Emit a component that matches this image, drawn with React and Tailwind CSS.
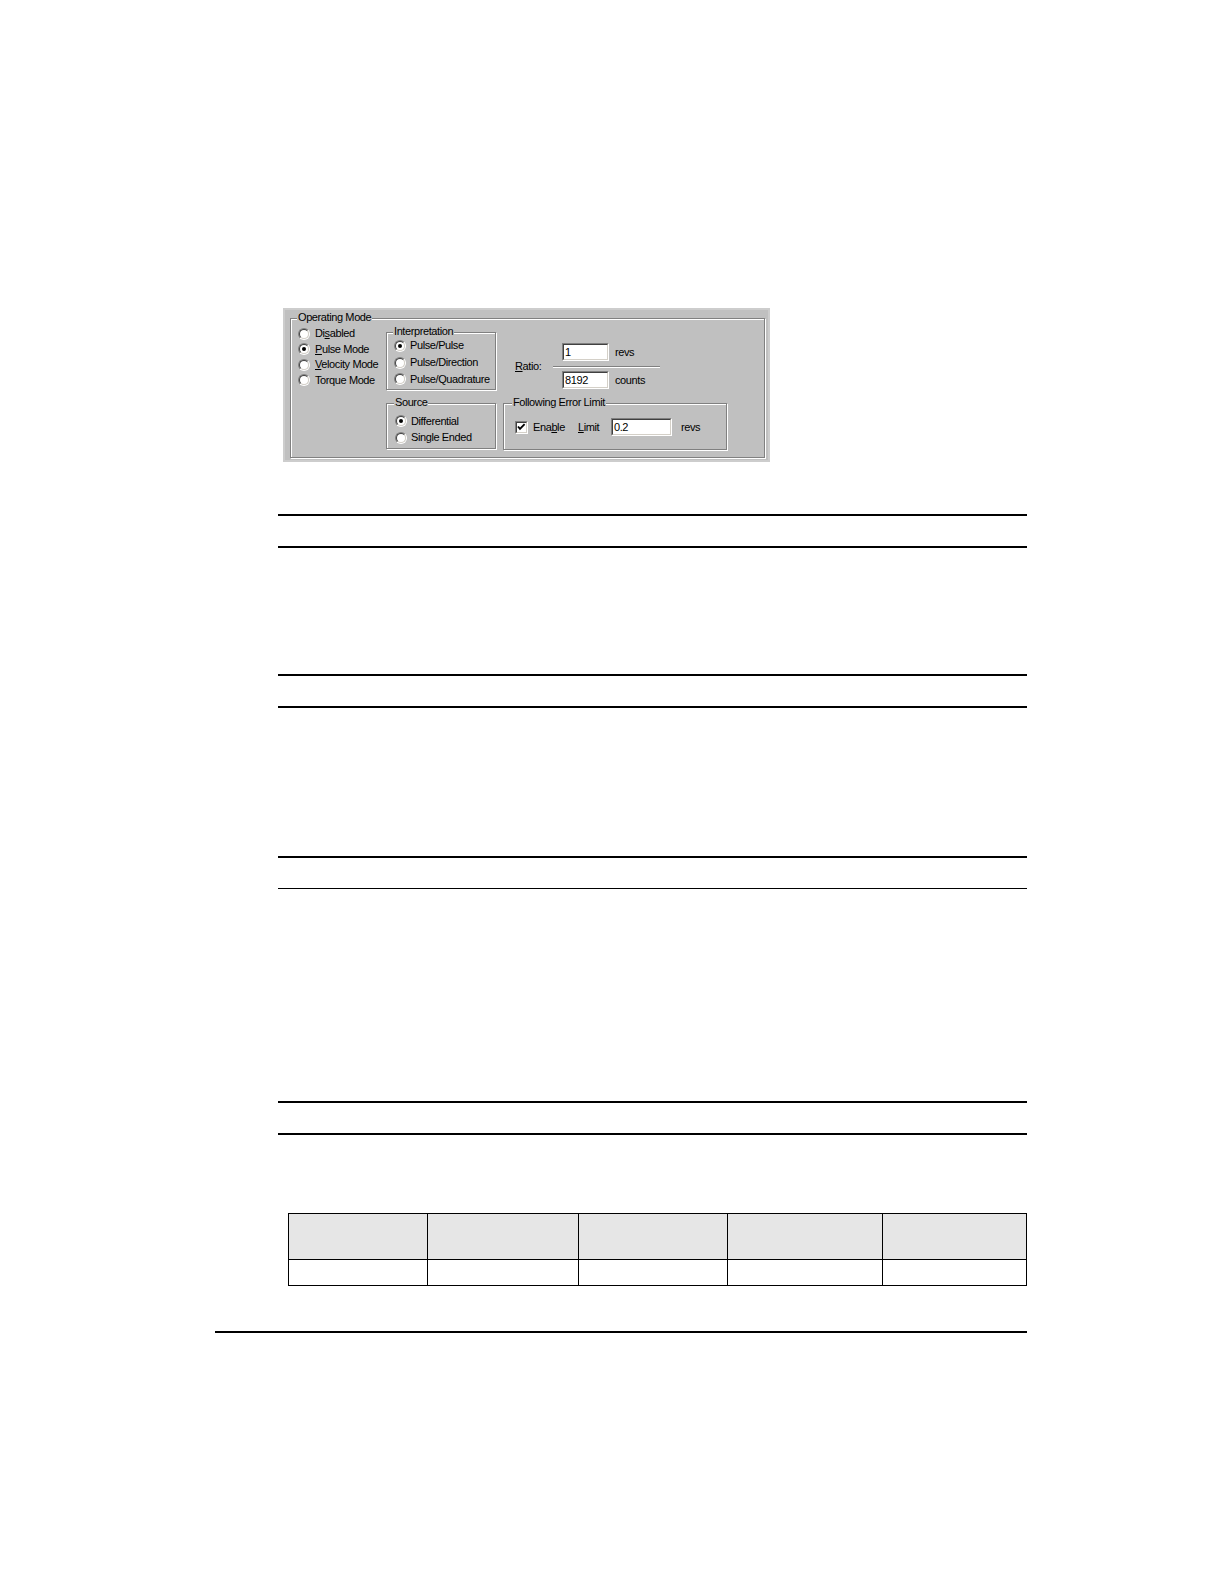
import React from "react";

// classic win9x look: sunken radio button
const Radio = ({ checked }) => (
  <span className="inline-block w-[12px] h-[12px] shrink-0 rounded-full border border-t-[#808080] border-l-[#808080] border-r-white border-b-white">
    <span className="flex w-full h-full items-center justify-center rounded-full border border-t-[#404040] border-l-[#404040] border-r-[#d4d0c8] border-b-[#d4d0c8] bg-white">
      {checked && <span className="block w-[4px] h-[4px] rounded-full bg-black" />}
    </span>
  </span>
);

const Checkbox = ({ checked }) => (
  <span className="inline-block w-[13px] h-[13px] shrink-0 border border-t-[#808080] border-l-[#808080] border-r-white border-b-white">
    <span className="flex w-full h-full items-center justify-center border border-t-[#404040] border-l-[#404040] border-r-[#d4d0c8] border-b-[#d4d0c8] bg-white">
      {checked && (
        <svg width="9" height="9" viewBox="0 0 9 9">
          <polyline points="1,3.5 3,5.8 7.6,1.2" fill="none" stroke="#000" strokeWidth="1.9" />
        </svg>
      )}
    </span>
  </span>
);

const TextBox = ({ value, width }) => (
  <span className="inline-block h-[18px] shrink-0 border border-t-[#808080] border-l-[#808080] border-r-white border-b-white" style={{ width }}>
    <span className="flex w-full h-full items-center pl-[1px] border border-t-[#404040] border-l-[#404040] border-r-[#d4d0c8] border-b-[#d4d0c8] bg-white leading-none">
      {value}
    </span>
  </span>
);

const GroupBox = ({ title, titleLeft, className, children }) => (
  <div className={"relative border border-[#808080] shadow-[inset_1px_1px_0_#fff,1px_1px_0_#fff] " + className}>
    <span className={"absolute -top-[8px] px-[1px] bg-[#c0c0c0] leading-[13px] " + titleLeft}>{title}</span>
    {children}
  </div>
);

const Option = ({ checked, gap, className, children }) => (
  <div className={"flex items-center " + className}>
    <Radio checked={checked} />
    <span className={gap + " leading-none"}>{children}</span>
  </div>
);

const Line = ({ className }) => <div className={"ml-[278px] w-[749px] bg-black " + className} />;

const Dialog = () => (
  <div
    className="ml-[283px] w-[487px] h-[154px] bg-[#c0c0c0] border-2 border-[#cdcdcd] pl-[5px] pt-[8px] text-[11px] tracking-[-0.4px] text-black"
    style={{ fontFamily: '"Liberation Sans", Arial, sans-serif' }}
  >
    <GroupBox title="Operating Mode" titleLeft="left-[6px]" className="w-[475px] h-[140px] flex items-start">
      {/* mode list */}
      <div className="pl-[7px] mt-[7px] w-[95px] shrink-0">
        <Option gap="ml-[5px]" className="h-[15.5px]">
          Di<u className="underline-offset-1">s</u>abled
        </Option>
        <Option checked gap="ml-[5px]" className="h-[15.5px]">
          <u className="underline-offset-1">P</u>ulse Mode
        </Option>
        <Option gap="ml-[5px]" className="h-[15.5px]">
          <u className="underline-offset-1">V</u>elocity Mode
        </Option>
        <Option gap="ml-[5px]" className="h-[15.5px]">
          Torque Mode
        </Option>
      </div>

      <div className="mt-[13px] w-[110px] shrink-0">
        <GroupBox title="Interpretation" titleLeft="left-[6px]" className="w-[110px] h-[58px] pl-[7px] pt-[4px]">
          <Option checked gap="ml-[4px]" className="h-[17px]">Pulse/Pulse</Option>
          <Option gap="ml-[4px]" className="h-[17px]">Pulse/Direction</Option>
          <Option gap="ml-[4px]" className="h-[16px]">Pulse/Quadrature</Option>
        </GroupBox>
        <GroupBox title="Source" titleLeft="left-[7px]" className="mt-[13px] w-[110px] h-[46px] pl-[8px] pt-[9px]">
          <Option checked gap="ml-[4px]" className="h-[16.5px]">Differential</Option>
          <Option gap="ml-[4px]" className="h-[16.5px]">Single Ended</Option>
        </GroupBox>
      </div>

      <div className="ml-[7px] mt-[13px] w-[224px] shrink-0">
        {/* ratio fraction */}
        <div className="flex items-center pl-[12px] pt-[11px]">
          <span className="w-[38px] shrink-0 leading-none">
            <u className="underline-offset-1">R</u>atio:
          </span>
          <div className="w-[107px] shrink-0">
            <div className="flex items-center pl-[9px]">
              <TextBox value="1" width="47px" />
              <span className="ml-[6px] leading-none">revs</span>
            </div>
            <div className="mt-[5px] h-px bg-[#808080]" />
            <div className="h-px bg-white" />
            <div className="mt-[3px] flex items-center pl-[9px]">
              <TextBox value="8192" width="47px" />
              <span className="ml-[6px] leading-none">counts</span>
            </div>
          </div>
        </div>

        <GroupBox title="Following Error Limit" titleLeft="left-[8px]" className="mt-[14px] w-[224px] h-[47px]">
          <div className="flex items-center pl-[11px] pt-[14px] h-[32px]">
            <Checkbox checked />
            <span className="ml-[5px] w-[45px] shrink-0 leading-none">
              Ena<u className="underline-offset-1">b</u>le
            </span>
            <span className="w-[33px] shrink-0 leading-none">
              <u className="underline-offset-1">L</u>imit
            </span>
            <TextBox value="0.2" width="61px" />
            <span className="ml-[9px] leading-none">revs</span>
          </div>
        </GroupBox>
      </div>
    </GroupBox>
  </div>
);

const cols = ["", "", "", "", ""];

const Table = () => (
  <div className="ml-[288px] mt-[78px] w-[739px] border border-black">
    <div className="grid grid-cols-[138px_151px_149px_155px_144px] h-[45px] bg-[#e6e6e6]">
      {cols.map((c, i) => (
        <div key={i} className={i ? "border-l border-black" : ""}>{c}</div>
      ))}
    </div>
    <div className="grid grid-cols-[138px_151px_149px_155px_144px] h-[26px] border-t border-black">
      {cols.map((c, i) => (
        <div key={i} className={i ? "border-l border-black" : ""}>{c}</div>
      ))}
    </div>
  </div>
);

export default function App() {
  return (
    <div className="w-[1224px] h-[1584px] bg-white overflow-hidden flex flex-col items-start pt-[308px]">
      <Dialog />

      <Line className="mt-[52px] h-[2px]" />
      <Line className="mt-[30px] h-[2px]" />

      <Line className="mt-[126px] h-[2px]" />
      <Line className="mt-[30px] h-[2px]" />

      <Line className="mt-[148px] h-[2px]" />
      <Line className="mt-[30px] h-px" />

      <Line className="mt-[212px] h-[2px]" />
      <Line className="mt-[30px] h-[2px]" />

      <Table />

      {/* page footer rule */}
      <div className="ml-[215px] mt-[45px] w-[812px] h-[2px] bg-black" />
    </div>
  );
}
